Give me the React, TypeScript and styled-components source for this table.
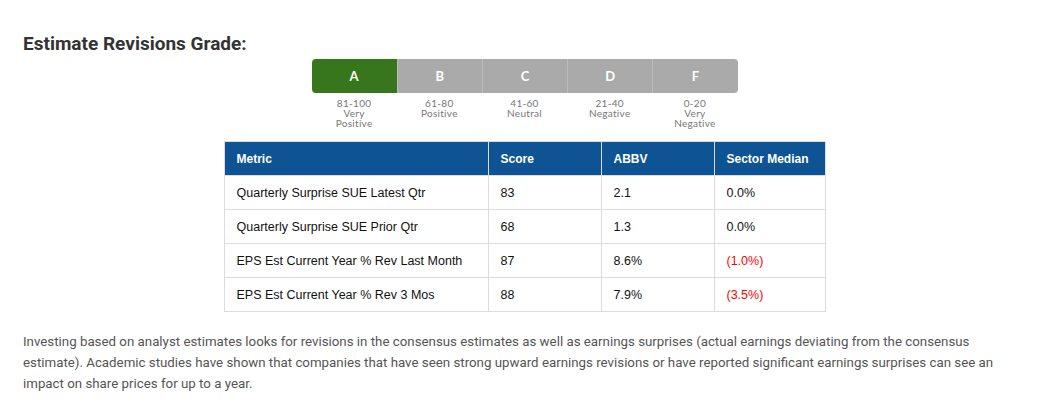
import React from 'react'
import styled, { createGlobalStyle } from 'styled-components'

const GlobalStyle = createGlobalStyle`
  html, body {
    margin: 0;
    padding: 0;
    background: #fff;
  }
`

interface Grade {
  letter: string;
  range: string;
  label: string[];
}

const grades: Grade[] = [
  { letter: 'A', range: '81-100', label: ['Very', 'Positive'] },
  { letter: 'B', range: '61-80', label: ['Positive'] },
  { letter: 'C', range: '41-60', label: ['Neutral'] },
  { letter: 'D', range: '21-40', label: ['Negative'] },
  { letter: 'F', range: '0-20', label: ['Very', 'Negative'] },
]

const activeGrade = 'A'

interface Row {
  metric: string;
  score: string;
  abbv: string;
  median: string;
}

const rows: Row[] = [
  { metric: 'Quarterly Surprise SUE Latest Qtr', score: '83', abbv: '2.1', median: '0.0%' },
  { metric: 'Quarterly Surprise SUE Prior Qtr', score: '68', abbv: '1.3', median: '0.0%' },
  { metric: 'EPS Est Current Year % Rev Last Month', score: '87', abbv: '8.6%', median: '(1.0%)' },
  { metric: 'EPS Est Current Year % Rev 3 Mos', score: '88', abbv: '7.9%', median: '(3.5%)' },
]

const App = () => {
  return (
    <Page>
      <GlobalStyle />
      <Title>Estimate Revisions Grade:</Title>
      <GradeScale>
        {grades.map((g) => (
          <GradeColumn key={g.letter}>
            <GradeBox active={g.letter === activeGrade}>{g.letter}</GradeBox>
            <GradeLabel>
              <div>{g.range}</div>
              {g.label.map((l) => <div key={l}>{l}</div>)}
            </GradeLabel>
          </GradeColumn>
        ))}
      </GradeScale>
      <Table>
        <colgroup>
          <col style={{ width: 264 }} />
          <col style={{ width: 113 }} />
          <col style={{ width: 113 }} />
          <col style={{ width: 111 }} />
        </colgroup>
        <thead>
          <tr>
            <Th>Metric</Th>
            <Th>Score</Th>
            <Th>ABBV</Th>
            <Th>Sector Median</Th>
          </tr>
        </thead>
        <tbody>
          {rows.map((r) => (
            <tr key={r.metric}>
              <Td>{r.metric}</Td>
              <Td>{r.score}</Td>
              <Td>{r.abbv}</Td>
              <Td negative={r.median.startsWith('(')}>{r.median}</Td>
            </tr>
          ))}
        </tbody>
      </Table>
      <Description>
        Investing based on analyst estimates looks for revisions in the consensus estimates as well as earnings surprises (actual earnings deviating from the consensus estimate). Academic studies have shown that companies that have seen strong upward earnings revisions or have reported significant earnings surprises can see an impact on share prices for up to a year.
      </Description>
    </Page>
  )
}

const Page = styled.div`
  padding: 31px 13px 0 23px;
  display: flex;
  flex-direction: column;
  align-items: center;
`

const Title = styled.h2`
  align-self: stretch;
  margin: 0;
  font-family: Roboto, 'Liberation Sans', sans-serif;
  font-size: 19px;
  font-weight: 700;
  line-height: 26px;
  color: #333;
`

const GradeScale = styled.div`
  display: flex;
  margin-top: 2px;
  width: 426px;
`

const GradeColumn = styled.div`
  flex: 1;
  display: flex;
  flex-direction: column;
  align-items: stretch;

  & + & > div:first-child {
    border-left: 1px solid #bcbcbc;
  }
  &:first-child > div:first-child {
    border-radius: 4px 0 0 4px;
  }
  &:last-child > div:first-child {
    border-radius: 0 4px 4px 0;
  }
`

const GradeBox = styled.div<{ active?: boolean }>`
  height: 34px;
  display: flex;
  align-items: center;
  justify-content: center;
  background: ${({ active }) => (active ? '#38761d' : '#aaaaaa')};
  color: #fff;
  font-family: Lato, 'Open Sans', sans-serif;
  font-size: 13px;
  font-weight: 700;
`

const GradeLabel = styled.div`
  margin-top: 5px;
  text-align: center;
  font-family: Lato, 'Open Sans', sans-serif;
  font-size: 10px;
  letter-spacing: 0.3px;
  line-height: 10px;
  color: #777;
`

const Table = styled.table`
  margin-top: 13px;
  width: 601px;
  border-collapse: collapse;
  table-layout: fixed;
  font-family: 'Liberation Sans', Arial, sans-serif;
  font-size: 12.5px;
`

const Th = styled.th`
  height: 33px;
  padding: 0 12px;
  text-align: left;
  white-space: nowrap;
  background: #0e5394;
  color: #fff;
  font-size: 12px;
  font-weight: 700;
  border: 1px solid #dcdcdc;

  & + & {
    border-left: 1px solid #fff;
  }
`

const Td = styled.td<{ negative?: boolean }>`
  height: 33px;
  padding: 0 12px;
  border: 1px solid #dcdcdc;
  color: ${({ negative }) => (negative ? '#ff0000' : '#111')};
`

const Description = styled.p`
  align-self: stretch;
  margin: 19px 0 0;
  font-family: Roboto, 'Liberation Sans', sans-serif;
  font-size: 13.3px;
  line-height: 21px;
  color: #555;
`

export default App
